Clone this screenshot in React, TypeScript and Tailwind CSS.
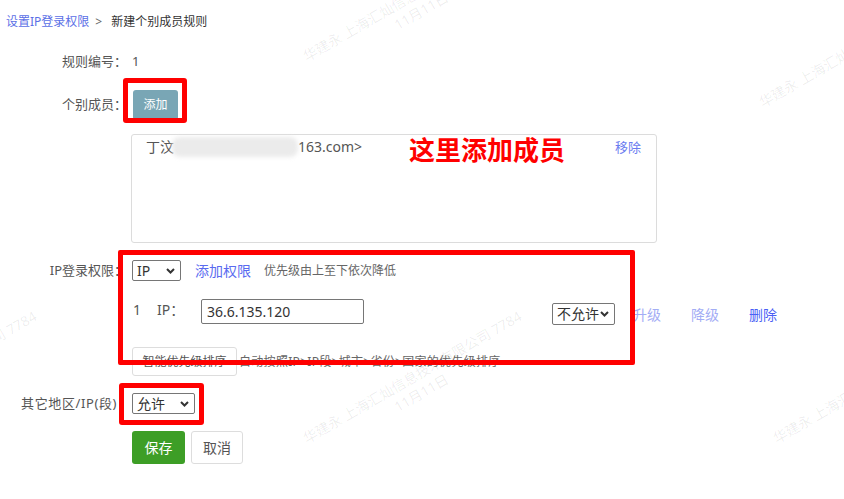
import React from "react";

const Chevron = () => (
  <svg width="9" height="6" viewBox="0 0 9 6" className="shrink-0">
    <path d="M1 1l3.5 3.5L8 1" fill="none" stroke="#333" strokeWidth="2" />
  </svg>
);

function Select({ text, className }: { text: string; className: string }) {
  return (
    <div
      className={`flex items-center justify-between border border-[#767676] rounded-[2px] pl-[4px] pr-[5px] text-[14px] leading-[18px] text-[#333] bg-white ${className}`}
    >
      <span>{text}</span>
      <Chevron />
    </div>
  );
}

function WmText() {
  return (
    <>
      <div>华建永 上海汇灿信息技术有限公司 7784</div>
      <div>11月11日</div>
    </>
  );
}

export default function App() {
  return (
    <div className="relative w-[844px] h-[499px] overflow-hidden bg-white font-['Noto_Sans','Noto_Sans_CJK_SC',sans-serif] text-[#555]">
      {/* breadcrumb */}
      <div className="pl-[6px] pt-[14px] text-[12px] leading-[16px] flex">
        <span className="text-[#5b6fe6]">设置IP登录权限</span>
        <span className="ml-[6px] mr-[9px] text-[#666]">&gt;</span>
        <span className="text-[#333]">新建个别成员规则</span>
      </div>

      {/* rule number */}
      <div className="mt-[22px] flex items-center h-[20px] text-[13px]">
        <div className="w-[127px] text-right">规则编号：</div>
        <div className="ml-[5px]">1</div>
      </div>

      {/* members */}
      <div className="mt-[18px] flex items-center h-[30px] text-[13px]">
        <div className="w-[127px] text-right">个别成员：</div>
        <button className="ml-[6px] w-[45px] h-[30px] rounded-[3px] bg-[#79a6b5] text-white text-[12px]">
          添加
        </button>
      </div>

      <div className="mt-[14px] ml-[131px] w-[526px] h-[109px] border border-[#dcdcdc] rounded-[3px] pt-[2px] pl-[14px] pr-[15px]">
        <div className="flex justify-between text-[14px] leading-[20px]">
          <div className="flex">
            <span>丁汶</span>
            <span className="inline-block w-[124px]" />
            <span>163.com&gt;</span>
          </div>
          <span className="text-[13px] text-[#6b7cf0]">移除</span>
        </div>
      </div>

      {/* IP rules */}
      <div className="mt-[17px] flex items-center h-[21px] text-[13px]">
        <div className="w-[127px] text-right">IP登录权限：</div>
        <Select text="IP" className="ml-[5px] w-[49px] h-[21px]" />
        <span className="ml-[14px] text-[14px] text-[#5a6bf0]">添加权限</span>
        <span className="ml-[13px] text-[12px] text-[#666]">优先级由上至下依次降低</span>
      </div>

      <div className="mt-[18px] ml-[132px] flex items-start h-[26px] text-[14px]">
        <span className="w-[25px] pl-[1px] leading-[20px] mt-[1px]">1</span>
        <span className="w-[44px] leading-[20px] mt-[1px]">IP：</span>
        <div className="w-[163px] h-[25px] border border-[#767676] rounded-[2px] pl-[5px] leading-[23px] text-[#333]">
          36.6.135.120
        </div>
        <Select text="不允许" className="ml-[188px] mt-[4px] w-[63px] h-[22px]" />
        <span className="ml-[18px] mt-[6px] leading-[20px] text-[#a3adf5]">升级</span>
        <span className="ml-[30px] mt-[6px] leading-[20px] text-[#a3adf5]">降级</span>
        <span className="ml-[30px] mt-[6px] leading-[20px] text-[#4b5ff5]">删除</span>
      </div>

      <div className="mt-[22px] ml-[132px] flex items-center">
        <button className="w-[105px] h-[29px] border border-[#ddd] rounded-[3px] text-[12px] text-[#555]">
          智能优先级排序
        </button>
        <span className="ml-[2px] text-[12px] tracking-[0.3px] text-[#666]">
          自动按照IP&gt;IP段&gt;城市&gt;省份&gt;国家的优先级排序
        </span>
      </div>

      {/* other regions */}
      <div className="mt-[17px] flex items-center h-[21px] text-[13px]">
        <div className="w-[117px] text-right tracking-[0.6px]">其它地区/IP(段)</div>
        <Select text="允许" className="ml-[15px] w-[63px] h-[21px]" />
      </div>

      <div className="mt-[17px] ml-[132px] flex gap-[6px]">
        <button className="w-[53px] h-[33px] rounded-[3px] bg-[#3d9e26] text-white text-[14px]">保存</button>
        <button className="w-[52px] h-[33px] rounded-[3px] border border-[#ddd] text-[14px] text-[#555]">取消</button>
      </div>

      {/* blurred email */}
      <div className="absolute left-[172px] top-[137px] w-[126px] h-[20px] rounded-[8px] bg-[#ebebeb] blur-[2px]" />

      {/* annotations */}
      <div className="absolute left-[409px] top-[132px] text-[26px] leading-[36px] font-bold text-[#ff0000]">
        这里添加成员
      </div>
      <div className="absolute left-[123px] top-[78px] w-[64px] h-[45px] border-[5px] border-[#ff0000] rounded-[3px]" />
      <div className="absolute left-[118px] top-[250px] w-[517px] h-[115px] border-[5px] border-[#ff0000] rounded-[2px]" />
      <div className="absolute left-[119px] top-[383px] w-[85px] h-[42px] border-[5px] border-[#ff0000] rounded-[3px]" />

      {/* watermarks */}
      <div className="pointer-events-none absolute left-[300px] top-[50px] origin-top-left -rotate-[30deg] text-center text-[14px] leading-[18px] whitespace-nowrap text-[rgba(0,0,0,0.075)]">
        <WmText />
      </div>
      <div className="pointer-events-none absolute left-[756px] top-[96px] origin-top-left -rotate-[30deg] text-center text-[14px] leading-[18px] whitespace-nowrap text-[rgba(0,0,0,0.075)]">
        <WmText />
      </div>
      <div className="pointer-events-none absolute left-[-185px] top-[432px] origin-top-left -rotate-[30deg] text-center text-[14px] leading-[18px] whitespace-nowrap text-[rgba(0,0,0,0.075)]">
        <WmText />
      </div>
      <div className="pointer-events-none absolute left-[300px] top-[432px] origin-top-left -rotate-[30deg] text-center text-[14px] leading-[18px] whitespace-nowrap text-[rgba(0,0,0,0.075)]">
        <WmText />
      </div>
      <div className="pointer-events-none absolute left-[770px] top-[432px] origin-top-left -rotate-[30deg] text-center text-[14px] leading-[18px] whitespace-nowrap text-[rgba(0,0,0,0.075)]">
        <WmText />
      </div>
    </div>
  );
}
